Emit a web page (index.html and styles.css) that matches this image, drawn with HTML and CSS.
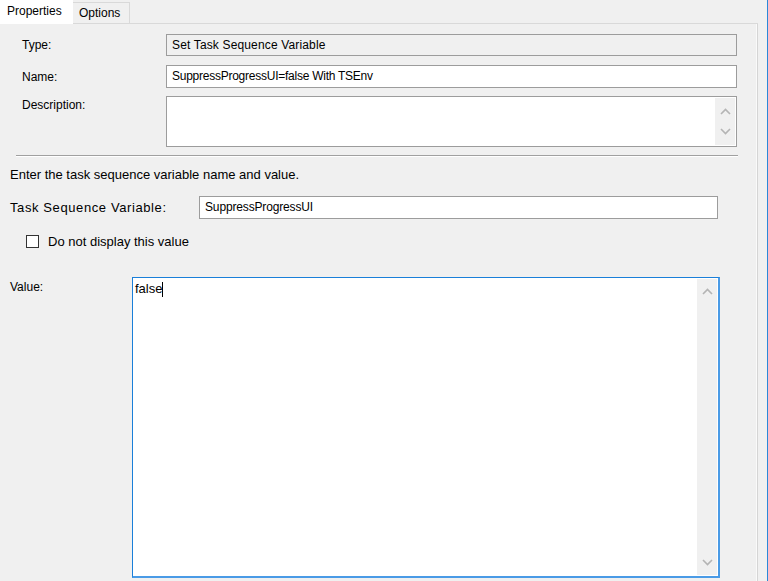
FILE: index.html
```html
<!DOCTYPE html>
<html>
<head>
<meta charset="utf-8">
<link rel="stylesheet" href="styles.css">
</head>
<body>
<div class="window">
  <div class="main">
    <div class="tabs">
      <div class="tab active">Properties</div>
      <div class="tab">Options</div>
      <div class="tab-fill"></div>
    </div>
    <div class="page">
      <div class="row row-type">
        <div class="lbl lbl-top">Type:</div>
        <div class="field ro">Set Task Sequence Variable</div>
      </div>
      <div class="row row-name">
        <div class="lbl lbl-top">Name:</div>
        <div class="field">SuppressProgressUI=false With TSEnv</div>
      </div>
      <div class="row row-desc">
        <div class="lbl lbl-top lbl-desc">Description:</div>
        <div class="field multi desc">
          <div class="area"></div>
          <div class="sbar">
            <svg class="chev" width="11" height="7" viewBox="0 0 11 7"><polyline points="1,6 5.5,1.5 10,6" fill="none" stroke="#b4b4b4" stroke-width="1.6"/></svg>
            <svg class="chev" width="11" height="7" viewBox="0 0 11 7"><polyline points="1,1 5.5,5.5 10,1" fill="none" stroke="#b4b4b4" stroke-width="1.6"/></svg>
          </div>
        </div>
      </div>
      <div class="sep"></div>
      <div class="intro">Enter the task sequence variable name and value.</div>
      <div class="row row-var">
        <div class="lbl lbl-var">Task Sequence Variable:</div>
        <div class="field var">SuppressProgressUI</div>
      </div>
      <div class="row row-check">
        <div class="checkbox"></div>
        <div class="check-text">Do not display this value</div>
      </div>
      <div class="row row-value">
        <div class="lbl lbl-value">Value:</div>
        <div class="field multi value">
          <div class="area"><span class="txt">false</span><span class="caret"></span></div>
          <div class="sbar">
            <svg class="chev" width="11" height="7" viewBox="0 0 11 7"><polyline points="1,6 5.5,1.5 10,6" fill="none" stroke="#b4b4b4" stroke-width="1.6"/></svg>
            <svg class="chev" width="11" height="7" viewBox="0 0 11 7"><polyline points="1,1 5.5,5.5 10,1" fill="none" stroke="#b4b4b4" stroke-width="1.6"/></svg>
          </div>
        </div>
      </div>
    </div>
  </div>
</div>
</body>
</html>
```

FILE: styles.css
```css
html, body {
  margin: 0;
  padding: 0;
  background: #f0f0f0;
}
body {
  font-family: "Liberation Sans", Arial, sans-serif;
  font-size: 12px;
  color: #000;
}
.window {
  width: 768px;
  height: 581px;
  box-sizing: border-box;
  border-right: 1px solid #2b88d8;
  display: flex;
  overflow: hidden;
}
.main {
  width: 758px;
  display: flex;
  flex-direction: column;
}
.tabs {
  display: flex;
  align-items: flex-end;
  height: 24px;
  flex: none;
}
.tab {
  box-sizing: border-box;
  height: 22px;
  width: 57px;
  padding-left: 6px;
  line-height: 21px;
  border: 1px solid #d9d9d9;
  border-left: none;
  background: #f0f0f0;
}
.tab.active {
  height: 24px;
  width: 73px;
  padding-left: 7px;
  line-height: 22px;
  border: none;
  background: #fff;
}
.tab-fill {
  flex: 1;
  height: 1px;
  background: #d9d9d9;
}
.page {
  flex: 1;
  box-sizing: border-box;
  border-right: 1px solid #d5d5d5;
  box-shadow: inset -1px 0 0 #fafafa;
  padding-left: 10px;
  display: flex;
  flex-direction: column;
}
.row {
  display: flex;
  align-items: center;
  flex: none;
}
.lbl-top {
  width: 144px;
  padding-left: 12px;
  flex: none;
}
.field {
  box-sizing: border-box;
  border: 1px solid #9c9c9c;
  background: #fff;
  padding-left: 5px;
  white-space: nowrap;
}
.row-type { margin-top: 10px; }
.row-type .field {
  width: 571px;
  height: 22px;
  line-height: 20px;
  background: #f0f0f0;
  letter-spacing: 0.15px;
}
.row-name { margin-top: 9px; }
.row-name .field {
  width: 571px;
  height: 23px;
  line-height: 21px;
  letter-spacing: -0.25px;
}
.row-desc {
  margin-top: 8px;
  align-items: flex-start;
}
.lbl-desc { padding-top: 2px; }
.field.multi {
  display: flex;
  padding-left: 0;
}
.field.multi .area {
  flex: 1;
}
.desc {
  width: 571px;
  height: 51px;
}
.sbar {
  width: 20px;
  background: #f0f0f0;
  display: flex;
  flex-direction: column;
  justify-content: space-between;
  align-items: center;
  flex: none;
}
.desc .sbar { padding: 10px 0 10px; margin: 1px 1px 1px 0; }
.sep {
  margin: 8px 0 0 6px;
  width: 722px;
  height: 1px;
  background: #a0a0a0;
  border-bottom: 1px solid #fff;
  flex: none;
}
.intro {
  margin-top: 11px;
  line-height: 14px;
  font-size: 13px;
  flex: none;
}
.row-var { margin-top: 14px; }
.lbl-var {
  width: 189px;
  flex: none;
  font-size: 13px;
  letter-spacing: 0.6px;
}
.field.var {
  width: 519px;
  height: 23px;
  line-height: 21px;
  letter-spacing: -0.15px;
}
.row-check {
  margin-top: 14px;
  margin-left: 16px;
  height: 17px;
}
.checkbox {
  width: 13px;
  height: 13px;
  box-sizing: border-box;
  border: 1px solid #333;
  background: #fff;
  margin-right: 9px;
}
.check-text {
  font-size: 13px;
}
.row-value {
  margin-top: 27px;
  align-items: flex-start;
}
.lbl-value {
  width: 122px;
  flex: none;
  padding-top: 3px;
}
.field.value {
  width: 588px;
  height: 301px;
  border: 2px solid #4a9be6;
  border-top-width: 1px;
  border-left-width: 1px;
  border-color: #1a7fd9 #4a9be6 #4a9be6 #1a7fd9;
}
.value .area {
  padding: 4px 0 0 2px;
  line-height: 14px;
  font-size: 13px;
  display: flex;
  align-items: flex-start;
}
.caret {
  display: inline-block;
  width: 1px;
  height: 15px;
  background: #000;
}
.value .sbar {
  padding: 9px 0 9px;
  margin: 1px 1px 1px 0;
}
.chev { display: block; }
```
